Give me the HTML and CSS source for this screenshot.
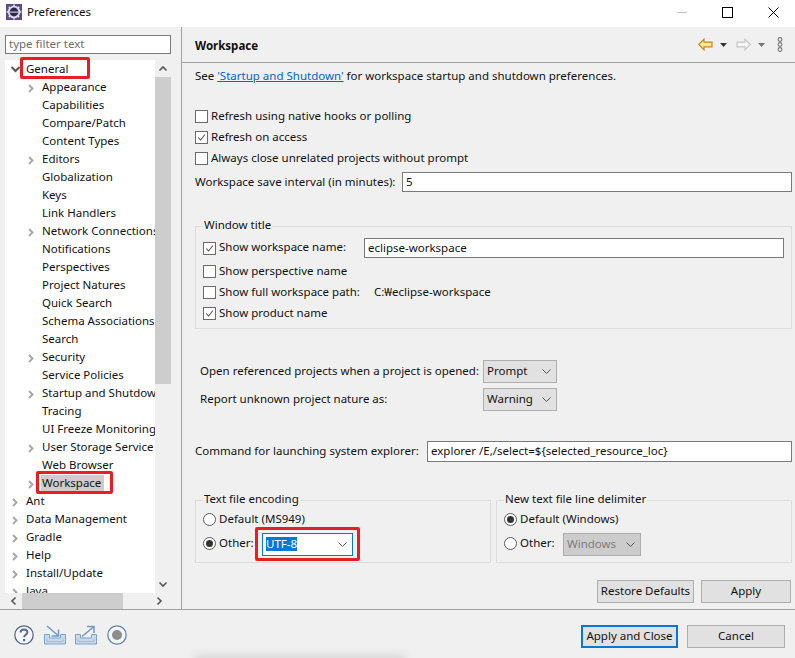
FILE: index.html
```html
<!DOCTYPE html>
<html lang="en">
<head>
<meta charset="utf-8">
<title>Preferences</title>
<link rel="stylesheet" href="styles.css">
</head>
<body>
<svg class="defs" width="0" height="0" aria-hidden="true">
  <symbol id="chev-r" viewBox="0 0 9 11"><path d="M2 2 5.500 5.500 2 9" fill="none" stroke="#a8a8a8" stroke-width="2"/></symbol>
  <symbol id="chev-d" viewBox="0 0 11 9"><path d="M1.500 2 5.500 6 9.500 2" fill="none" stroke="#555" stroke-width="2"/></symbol>
  <symbol id="combo-v" viewBox="0 0 9 5"><path d="M.5 .5 4.500 4.500 8.500 .5" fill="none" stroke="currentColor" stroke-width="1"/></symbol>
  <symbol id="check" viewBox="0 0 12 12"><path d="M2.500 6 5 8.700 9.700 2.700" fill="none" stroke="#555" stroke-width="1.200"/></symbol>
</svg>

<header class="titlebar">
  <svg class="app-icon" width="16" height="16" viewBox="0 0 16 16"><rect width="16" height="16" fill="#5b4a86"/><circle cx="8" cy="8" r="6.300" fill="#dcdce4"/><circle cx="8" cy="8" r="4.400" fill="#2c2a48"/><path d="M3.700 7.500h8.600v1.200H3.700z" fill="#cfcfd8"/><path d="M8 .6v2M8 13.400v2M.6 8h2M13.400 8h2M2.800 2.800l1.400 1.400M13.200 2.800l-1.400 1.400M2.800 13.200l1.400-1.400M13.200 13.200l-1.400-1.400" stroke="#dcdce4" stroke-width="1.600"/></svg>
  <span class="title-text">Preferences</span>
  <div class="win-controls">
    <svg width="10" height="10" viewBox="0 0 10 10"><path d="M0 5.500h10" stroke="#c4c4c4"/></svg>
    <svg width="11" height="11" viewBox="0 0 11 11"><rect x=".5" y=".5" width="10" height="10" fill="none" stroke="#000"/></svg>
    <svg width="11" height="11" viewBox="0 0 11 11"><path d="M.5 .5l10 10M10.500 .5l-10 10" stroke="#000"/></svg>
  </div>
</header>

<div class="main">
  <aside class="sidebar">
    <div class="filter">type filter text</div>
    <div class="tree-box">
      <div class="tree">
        <div class="row lvl0"><svg class="tw-d" width="11" height="9"><use href="#chev-d"/></svg><span class="lbl">General</span></div>
        <div class="row lvl1"><svg class="tw" width="9" height="11"><use href="#chev-r"/></svg><span class="lbl">Appearance</span></div>
        <div class="row lvl1"><span class="tw-none"></span><span class="lbl">Capabilities</span></div>
        <div class="row lvl1"><span class="tw-none"></span><span class="lbl">Compare/Patch</span></div>
        <div class="row lvl1"><span class="tw-none"></span><span class="lbl">Content Types</span></div>
        <div class="row lvl1"><svg class="tw" width="9" height="11"><use href="#chev-r"/></svg><span class="lbl">Editors</span></div>
        <div class="row lvl1"><span class="tw-none"></span><span class="lbl">Globalization</span></div>
        <div class="row lvl1"><span class="tw-none"></span><span class="lbl">Keys</span></div>
        <div class="row lvl1"><span class="tw-none"></span><span class="lbl">Link Handlers</span></div>
        <div class="row lvl1"><svg class="tw" width="9" height="11"><use href="#chev-r"/></svg><span class="lbl">Network Connections</span></div>
        <div class="row lvl1"><span class="tw-none"></span><span class="lbl">Notifications</span></div>
        <div class="row lvl1"><span class="tw-none"></span><span class="lbl">Perspectives</span></div>
        <div class="row lvl1"><span class="tw-none"></span><span class="lbl">Project Natures</span></div>
        <div class="row lvl1"><span class="tw-none"></span><span class="lbl">Quick Search</span></div>
        <div class="row lvl1"><span class="tw-none"></span><span class="lbl">Schema Associations</span></div>
        <div class="row lvl1"><span class="tw-none"></span><span class="lbl">Search</span></div>
        <div class="row lvl1"><svg class="tw" width="9" height="11"><use href="#chev-r"/></svg><span class="lbl">Security</span></div>
        <div class="row lvl1"><span class="tw-none"></span><span class="lbl">Service Policies</span></div>
        <div class="row lvl1"><svg class="tw" width="9" height="11"><use href="#chev-r"/></svg><span class="lbl">Startup and Shutdown</span></div>
        <div class="row lvl1"><span class="tw-none"></span><span class="lbl">Tracing</span></div>
        <div class="row lvl1"><span class="tw-none"></span><span class="lbl">UI Freeze Monitoring</span></div>
        <div class="row lvl1"><svg class="tw" width="9" height="11"><use href="#chev-r"/></svg><span class="lbl">User Storage Service</span></div>
        <div class="row lvl1"><span class="tw-none"></span><span class="lbl">Web Browser</span></div>
        <div class="row lvl1"><svg class="tw" width="9" height="11"><use href="#chev-r"/></svg><span class="lbl selected">Workspace</span><span class="mark mark-workspace"></span></div>
        <div class="row lvl0"><svg class="tw" width="9" height="11"><use href="#chev-r"/></svg><span class="lbl">Ant</span></div>
        <div class="row lvl0"><svg class="tw" width="9" height="11"><use href="#chev-r"/></svg><span class="lbl">Data Management</span></div>
        <div class="row lvl0"><svg class="tw" width="9" height="11"><use href="#chev-r"/></svg><span class="lbl">Gradle</span></div>
        <div class="row lvl0"><svg class="tw" width="9" height="11"><use href="#chev-r"/></svg><span class="lbl">Help</span></div>
        <div class="row lvl0"><svg class="tw" width="9" height="11"><use href="#chev-r"/></svg><span class="lbl">Install/Update</span></div>
        <div class="row lvl0"><svg class="tw" width="9" height="11"><use href="#chev-r"/></svg><span class="lbl">Java</span></div>
      </div>
      <div class="vscroll">
        <svg class="sb-arrow" width="16" height="17" viewBox="0 0 16 17"><path d="M4.500 10.500 8 7l3.500 3.500" fill="none" stroke="#555" stroke-width="1.600"/></svg>
        <div class="vthumb"></div>
        <svg class="sb-arrow sb-end" width="16" height="17" viewBox="0 0 16 17"><path d="M4.500 6.500 8 10l3.500-3.500" fill="none" stroke="#555" stroke-width="1.600"/></svg>
      </div>
      <div class="hscroll">
        <svg width="17" height="16" viewBox="0 0 17 16"><path d="M10.500 4.500 7 8l3.500 3.500" fill="none" stroke="#555" stroke-width="1.600"/></svg>
        <div class="hthumb"></div>
        <svg class="sb-end-h" width="17" height="16" viewBox="0 0 17 16"><path d="M6.500 4.500 10 8l-3.500 3.500" fill="none" stroke="#555" stroke-width="1.600"/></svg>
      </div>
      <span class="mark mark-general"></span>
    </div>
  </aside>

  <section class="panel">
    <div class="panel-head">
      <h1 class="panel-title">Workspace</h1>
      <div class="nav">
        <svg class="nav-back" width="15" height="13" viewBox="0 0 15 13"><path d="M.8 6.500 6 1.200v2.900h8v4.800H6v2.900z" fill="#fde79a" stroke="#c8861a" stroke-width="1.200"/></svg>
        <svg class="nav-drop" width="7" height="4" viewBox="0 0 7 4"><path d="M0 0h7L3.500 4z" fill="#333"/></svg>
        <svg class="nav-fwd" width="15" height="13" viewBox="0 0 15 13"><path d="M14.200 6.500 9 1.200v2.900H1v4.800h8v2.900z" fill="#f4f4f4" stroke="#c6c6c6" stroke-width="1.200"/></svg>
        <svg class="nav-drop" width="7" height="4" viewBox="0 0 7 4"><path d="M0 0h7L3.500 4z" fill="#777"/></svg>
        <svg class="nav-menu" width="6" height="15" viewBox="0 0 6 15"><g fill="none" stroke="#777" stroke-width="1.100"><circle cx="3" cy="2.500" r="1.900"/><circle cx="3" cy="7.500" r="1.900"/><circle cx="3" cy="12.500" r="1.900"/></g></svg>
      </div>
    </div>

    <div class="panel-body">
      <p class="intro">See <a class="link">'Startup and Shutdown'</a> for workspace startup and shutdown preferences.</p>

      <div class="checks">
        <div class="check-row"><span class="cb"></span>Refresh using native hooks or polling</div>
        <div class="check-row"><span class="cb"><svg width="12" height="12"><use href="#check"/></svg></span>Refresh on access</div>
        <div class="check-row"><span class="cb"></span>Always close unrelated projects without prompt</div>
      </div>
      <div class="field-row interval"><span class="interval-label">Workspace save interval (in minutes):</span><div class="input grow">5</div></div>

      <fieldset class="group title-group">
        <legend>Window title</legend>
        <div class="check-row first"><span class="cb"><svg width="12" height="12"><use href="#check"/></svg></span><span class="wname">Show workspace name:</span><div class="input grow">eclipse-workspace</div></div>
        <div class="check-row"><span class="cb"></span>Show perspective name</div>
        <div class="check-row"><span class="cb"></span><span class="wpath">Show full workspace path:</span><span>C:₩eclipse-workspace</span></div>
        <div class="check-row"><span class="cb"><svg width="12" height="12"><use href="#check"/></svg></span>Show product name</div>
      </fieldset>

      <div class="project-grid">
        <span class="grid-label">Open referenced projects when a project is opened:</span>
        <div class="combo">Prompt<svg class="combo-arrow" width="9" height="5"><use href="#combo-v"/></svg></div>
        <span class="grid-label">Report unknown project nature as:</span>
        <div class="combo">Warning<svg class="combo-arrow" width="9" height="5"><use href="#combo-v"/></svg></div>
      </div>

      <div class="field-row command"><span class="command-label">Command for launching system explorer:</span><div class="input grow">explorer /E,/select=${selected_resource_loc}</div></div>

      <div class="enc-row">
        <fieldset class="group enc">
          <legend>Text file encoding</legend>
          <div class="radio-row r1"><span class="radio"></span>Default (MS949)</div>
          <div class="radio-row r2"><span class="radio on"></span><span class="other">Other:</span>
            <div class="combo utf"><span class="sel-text">UTF-8</span><svg class="combo-arrow" width="9" height="5"><use href="#combo-v"/></svg><span class="mark mark-utf"></span></div>
          </div>
        </fieldset>
        <fieldset class="group enc">
          <legend>New text file line delimiter</legend>
          <div class="radio-row r1"><span class="radio on"></span>Default (Windows)</div>
          <div class="radio-row r2"><span class="radio"></span><span class="other">Other:</span>
            <div class="combo disabled">Windows<svg class="combo-arrow" width="9" height="5"><use href="#combo-v"/></svg></div>
          </div>
        </fieldset>
      </div>

      <div class="panel-buttons">
        <div class="btn restore">Restore Defaults</div>
        <div class="btn apply">Apply</div>
      </div>
    </div>
  </section>
</div>

<footer class="footer">
  <div class="foot-icons">
    <svg width="20" height="20" viewBox="0 0 20 20"><circle cx="10" cy="10" r="9.200" fill="#f4f6fa" stroke="#55698c" stroke-width="1.300"/><path d="M6.600 7.400C6.600 5.400 8.100 4.500 10 4.500s3.400 1 3.400 2.800c0 2.600-3.300 2.500-3.300 5" fill="none" stroke="#55698c" stroke-width="1.900"/><path d="M9 14h2.200v2.200H9z" fill="#55698c"/></svg>
    <svg width="22" height="20" viewBox="0 0 22 20"><path d="M.5 9.500h5v3.500h11V9.500h5v9.500H.5z" fill="#c7d9ea" stroke="#7ba3c6"/><path d="M3 13.500v3h16v-3" fill="none" stroke="#9dbbd6"/><path d="M3 1l10.500 9M14.500 4.500v6.500H7.500" fill="none" stroke="#6d9ac2" stroke-width="1.500"/></svg>
    <svg class="export" width="22" height="20" viewBox="0 0 22 20"><path d="M.5 9.500h5v3.500h11V9.500h5v9.500H.5z" fill="#c7d9ea" stroke="#7ba3c6"/><path d="M3 13.500v3h16v-3" fill="none" stroke="#9dbbd6"/><path d="M7 11.500 18.500 2M12 1.500h7V8" fill="none" stroke="#6d9ac2" stroke-width="1.500"/></svg>
    <svg width="20" height="20" viewBox="0 0 20 20"><circle cx="10" cy="10" r="9.200" fill="#f4f6fa" stroke="#5a84ad" stroke-width="1.200"/><circle cx="10" cy="10" r="5" fill="#8c8c8c"/></svg>
  </div>
  <div class="foot-buttons">
    <div class="btn primary">Apply and Close</div>
    <div class="btn cancel">Cancel</div>
  </div>
</footer>
</body>
</html>
```
FILE: styles.css
```css
* { box-sizing: border-box; }
html, body { margin: 0; padding: 0; }
body {
  width: 795px;
  height: 658px;
  overflow: hidden;
  background: #f0f0f0;
  color: #111;
  font: 11.5px/17px "Noto Sans", "Noto Sans CJK KR", sans-serif;
  display: flex;
  flex-direction: column;
}
.defs { position: absolute; }

.titlebar { height: 27px; background: #fff; display: flex; align-items: center; padding: 0 0 3px 6px; flex: none; }
.app-icon { flex: none; }
.title-text { margin: 0 0 1px 5px; }
.win-controls { margin-left: auto; display: flex; align-items: center; gap: 35px; padding-right: 16px; }

.main { display: flex; height: 582px; flex: none; }
.sidebar { width: 182px; border-right: 1px solid #a0a0a0; padding: 8px 10px 0 5px; flex: none; }
.filter { height: 19px; border: 1px solid #7a7a7a; background: #fff; color: #6d6d6d; padding-left: 3px; line-height: 16px; }
.tree-box { margin-top: 6px; width: 166px; height: 549px; display: grid; grid-template: 533px 16px / 150px 16px; position: relative; }
.tree { background: #fff; overflow: hidden; position: relative; }
.row { height: 18px; padding-bottom: 1px; display: flex; align-items: center; white-space: nowrap; position: relative; }
.lvl0 { padding-left: 5px; }
.lvl1 { padding-left: 21px; }
.tw { width: 9px; height: 11px; margin: 3px 6px 0 1px; flex: none; }
.tw-d { width: 11px; height: 9px; margin: 2px 5px 0 0; flex: none; }
.tw-none { width: 16px; flex: none; }
.lbl { display: block; }
.selected { background: #cdcdcd; margin-left: -1px; padding: 0 3px 0 1px; height: 16px; line-height: 16px; }
.mark { position: absolute; border: 3px solid #ec1c24; border-radius: 2px; pointer-events: none; }
.mark-general { left: 15px; top: -3px; width: 70px; height: 22px; }
.mark-workspace { left: 31px; top: -3px; width: 77px; height: 23px; }
.mark-utf { left: -8px; top: -7px; width: 105px; height: 34px; }

.vscroll { background: #f0f0f0; display: flex; flex-direction: column; }
.sb-arrow { flex: none; }
.vthumb { height: 307px; background: #cdcdcd; }
.sb-end { margin-top: auto; }
.hscroll { grid-column: 1 / 3; background: #f0f0f0; display: flex; }
.hthumb { width: 101px; background: #cdcdcd; }
.sb-end-h { margin-left: auto; margin-right: 3px; }

.panel { flex: 1; min-width: 0; display: flex; flex-direction: column; }
.panel-head { height: 36px; border-bottom: 1px solid #a0a0a0; display: flex; align-items: center; padding: 0 12px 0 13px; flex: none; }
.panel-title { margin: 3px 0 0; font-size: 11.5px; font-weight: 700; line-height: 18px; }
.nav { margin-left: auto; display: flex; align-items: center; }
.nav-back { margin-right: 7px; }
.nav-drop { margin-right: 9px; }
.nav-fwd { margin-right: 7px; }
.nav-menu { margin-left: 3px; }

.panel-body { padding: 4px 3px 0 13px; flex: 1; }
.intro { margin: 0; height: 20px; line-height: 18px; }
.link { color: #0066cc; text-decoration: underline; }
.checks { margin-top: 19px; }
.check-row { height: 21px; padding-bottom: 2px; display: flex; align-items: center; white-space: nowrap; }
.cb { width: 13px; height: 13px; background: #fff; border: 1px solid #6a6a6a; margin: 2px 3px 0 0; flex: none; display: flex; }
.cb svg { flex: none; margin: 0; width: 11px; height: 11px; }
.field-row { display: flex; align-items: center; }
.interval { margin-top: 3px; height: 20px; }
.interval-label { width: 207px; flex: none; margin-bottom: 2px; }
.input { height: 100%; background: #fff; border: 1px solid #7a7a7a; padding-left: 3px; line-height: 18px; white-space: nowrap; overflow: hidden; }
.grow { flex: 1; min-width: 0; }

.group { margin: 0; border: 1px solid #dcdcdc; min-width: 0; }
.group legend { padding: 0 1px; margin-left: 0; line-height: 13px; height: 16px; }
.title-group { margin-top: 26px; padding: 0 7px 5px 7px; height: 111px; }
.title-group .first { height: 20px; padding-bottom: 3px; margin-top: 4px; margin-bottom: 3px; }
.title-group .first .cb { margin-top: 3px; }
.title-group .first .input { height: 20px; align-self: flex-start; }
.wname { display: block; width: 145px; flex: none; }
.wpath { width: 155px; flex: none; }

.project-grid { margin-top: 31px; display: grid; grid-template-columns: 283px 74px; grid-template-rows: 23px 23px; row-gap: 5px; align-items: center; padding-left: 5px; white-space: nowrap; }
.grid-label { margin-bottom: 2px; }
.combo { height: 23px; background: #e1e1e1; border: 1px solid #adadad; padding: 0 5px 2px 3px; line-height: 20px; position: relative; display: flex; align-items: center; justify-content: space-between; color: #111; }
.combo-arrow { flex: none; color: #555; margin-top: 2px; }

.command { margin-top: 30px; height: 21px; }
.command-label { width: 232px; flex: none; margin-bottom: 2px; }

.enc-row { margin-top: 30px; display: flex; gap: 5px; }
.enc { flex: 1; height: 71px; padding: 0 7px 0 7px; }
.radio-row { display: flex; align-items: center; white-space: nowrap; }
.r1 { height: 20px; padding-bottom: 2px; margin-top: 1px; }
.r1 .radio { margin-top: 2px; }
.r2 { height: 23px; margin-top: 4px; }
.radio { width: 13px; height: 13px; border-radius: 50%; border: 1px solid #5a5a5a; background: #fff; margin-right: 3px; flex: none; display: flex; align-items: center; justify-content: center; }
.r2 .radio { margin-bottom: 2px; }
.r2 .other { margin-bottom: 4px; }
.radio.on::before { content: ""; width: 7px; height: 7px; border-radius: 50%; background: #333; }
.other { width: 43px; flex: none; }
.utf { width: 91px; background: #fff; border-color: #0078d7; }
.sel-text { background: #0078d7; color: #fff; line-height: 14px; padding-right: 0; }
.disabled { width: 78px; background: #cccccc; color: #7c7c7c; }

.panel-buttons { margin-top: 17px; display: flex; justify-content: flex-end; gap: 7px; padding-right: 1px; }
.btn { height: 23px; line-height: 20px; text-align: center; background: #e1e1e1; border: 1px solid #adadad; white-space: nowrap; }
.restore { width: 97px; }
.apply { width: 90px; }

.footer { flex: none; height: 49px; border-top: 1px solid #a0a0a0; display: flex; align-items: flex-start; padding: 15px 10px 0 14px; position: relative; }
.footer::after { content: ""; position: absolute; left: 195px; bottom: -6px; width: 210px; height: 8px; background: #cfcfcf; filter: blur(4px); }
.foot-icons { display: flex; align-items: center; gap: 10px; }
.export { margin-left: -1px; }
.foot-buttons { margin-left: auto; display: flex; gap: 9px; }
.primary { width: 97px; border: 2px solid #0078d7; line-height: 18px; }
.cancel { width: 98px; }
```
